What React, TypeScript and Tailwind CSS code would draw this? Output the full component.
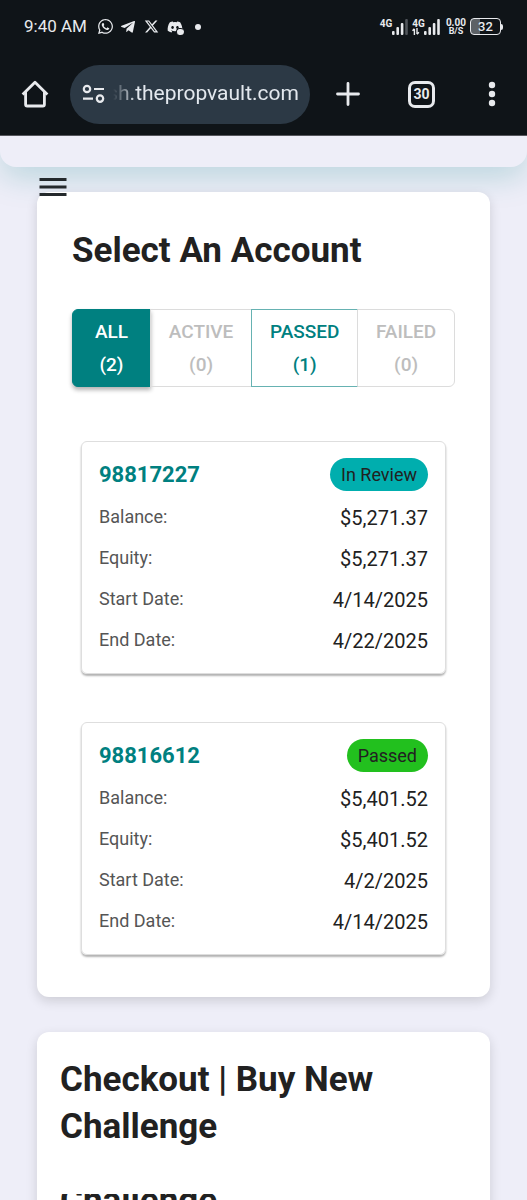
import { useState } from 'react'
import { FaDiscord, FaTelegramPlane, FaWhatsapp } from 'react-icons/fa'
import { FaXTwitter } from 'react-icons/fa6'
import { MdMenu } from 'react-icons/md'

const filters = [
  { label: 'ALL', count: 2 },
  { label: 'ACTIVE', count: 0 },
  { label: 'PASSED', count: 1 },
  { label: 'FAILED', count: 0 }
]

const accounts = [
  {
    id: '98817227',
    status: 'In Review',
    badge: 'bg-[#00aeae]',
    details: [
      { label: 'Balance:', value: '$5,271.37' },
      { label: 'Equity:', value: '$5,271.37' },
      { label: 'Start Date:', value: '4/14/2025' },
      { label: 'End Date:', value: '4/22/2025' }
    ]
  },
  {
    id: '98816612',
    status: 'Passed',
    badge: 'bg-[#22c01e]',
    details: [
      { label: 'Balance:', value: '$5,401.52' },
      { label: 'Equity:', value: '$5,401.52' },
      { label: 'Start Date:', value: '4/2/2025' },
      { label: 'End Date:', value: '4/14/2025' }
    ]
  }
]

function SignalBars({ weak }: { weak?: boolean }) {
  return (
    <svg width="16" height="16" viewBox="0 0 16 16" fill="#e8eaed">
      <rect x="0" y="12" width="2.6" height="4" rx="1" />
      <rect x="4.4" y="8" width="2.6" height="8" rx="1" />
      <rect x="8.8" y="4" width="2.6" height="12" rx="1" />
      <rect x="13.2" y="0" width="2.6" height="16" rx="1" fill={weak ? '#50555b' : '#e8eaed'} />
    </svg>
  )
}

function StatusBar() {
  return (
    <div className="flex h-[53px] items-center justify-between pl-6 pr-6 text-[#e8eaed]">
      <div className="flex items-center">
        <span className="text-[17px]">9:40 AM</span>
        <FaWhatsapp className="ml-[10px] size-[17px]" />
        <FaTelegramPlane className="ml-[6px] size-4" />
        <FaXTwitter className="ml-2 size-[15px]" />
        <span className="relative ml-2 flex">
          <FaDiscord className="size-4" />
          <span className="absolute -right-px bottom-0 h-[7px] w-2 rounded-sm border-l border-t border-[#0f1418] bg-[#e8eaed]" />
        </span>
        <span className="ml-3 size-[6px] rounded-full bg-[#e8eaed]" />
      </div>
      <div className="flex items-center">
        <div className="flex h-4 items-end">
          <span className="self-start text-[10px] font-bold leading-[9px]">4G</span>
          <SignalBars weak />
        </div>
        <div className="ml-1 flex h-4 items-end">
          <div className="-mr-px flex flex-col">
            <span className="text-[10px] font-bold leading-[9px]">4G</span>
            <svg width="8" height="7" viewBox="0 0 8 7" fill="none" stroke="#e8eaed" strokeWidth="1.4">
              <path d="M2.4 7V1M0.5 2.8L2.4 0.8" />
              <path d="M5 0v6M6.9 4.2L5 6.2" />
            </svg>
          </div>
          <SignalBars />
        </div>
        <div className="ml-[6px] flex flex-col items-center font-bold">
          <span className="text-[10px] leading-[9px]">0.00</span>
          <span className="text-[9px] leading-[8px]">B/S</span>
        </div>
        <div className="ml-1 flex items-center">
          <span className="flex h-[17px] w-[31px] items-center justify-center rounded-[4px] border border-[#e8eaed] bg-linear-to-r from-[#5c6166] from-32% to-transparent to-32% text-[13px] font-medium">
            32
          </span>
          <span className="h-[6px] w-[2px] rounded-r-sm bg-[#e8eaed]" />
        </div>
      </div>
    </div>
  )
}

function BrowserToolbar() {
  return (
    <div className="flex h-[82px] items-center pl-5 pr-[21px] text-[#e8eaed]">
      <button aria-label="Home" className="mr-5 shrink-0">
        <svg width="30" height="30" viewBox="0 0 30 30" fill="none" stroke="#e8eaed" strokeWidth="2.8" strokeLinejoin="round">
          <path d="M2.6 15.6L15 3.2l12.4 12.4" />
          <path d="M5.6 13V25.4Q5.6 27 7.2 27H22.8Q24.4 27 24.4 25.4V13" />
        </svg>
      </button>
      <div className="flex h-[59px] w-[240px] flex-auto items-center rounded-full bg-[#2c3945] pl-3 pr-[11px]">
        <svg width="24" height="20" viewBox="0 0 24 20" fill="none" stroke="#e8eaed" strokeWidth="2.2" className="shrink-0">
          <circle cx="5" cy="5" r="3.2" />
          <path d="M12 5h10M1 14.6h10" />
          <circle cx="18" cy="14.6" r="3.2" />
        </svg>
        <input
          aria-label="Address"
          defaultValue="sh.thepropvault.com"
          className="w-0 min-w-0 flex-1 text-right text-[21px] text-[#e3e8ee] outline-none mask-l-from-[162px] mask-l-to-[186px]"
        />
      </div>
      <button aria-label="New tab" className="ml-6 shrink-0">
        <svg width="28" height="28" viewBox="0 0 28 28" stroke="#e8eaed" strokeWidth="2.8" strokeLinecap="round">
          <path d="M14 3.5v21M3.5 14h21" />
        </svg>
      </button>
      <button aria-label="Tabs" className="ml-[46px] flex size-[27px] shrink-0 items-center justify-center rounded-[7px] border-[3px] border-[#e8eaed] text-sm font-bold">
        30
      </button>
      <button aria-label="More" className="ml-[43px] shrink-0">
        <svg width="28" height="28" viewBox="0 0 28 28" fill="#e8eaed">
          <circle cx="14" cy="5" r="3.2" />
          <circle cx="14" cy="14" r="3.2" />
          <circle cx="14" cy="23" r="3.2" />
        </svg>
      </button>
    </div>
  )
}

function filterStyle(selected: boolean, count: number) {
  if (selected) {
    return 'border-[#008080] bg-[#008080] text-white shadow-[0_3px_4px_rgba(0,0,0,0.3)]'
  }
  if (count === 0) {
    return 'border-[#dcdcdc] text-[#bdbdbd]'
  }
  return 'border-[#66b2b2] text-[#008080]'
}

export default function App() {
  const [filter, setFilter] = useState('ALL')
  const shown = accounts.filter((a) => filter === 'ALL' || a.status.toUpperCase() === filter)

  return (
    <div className="flex h-screen flex-col overflow-hidden bg-[#eeeef8] font-[Roboto,sans-serif] text-[#212121]">
      <header className="shrink-0 border-b border-[#55565c] bg-[#0f1418]">
        <StatusBar />
        <BrowserToolbar />
      </header>

      <main className="relative min-h-0 flex-1 overflow-hidden">
        <div className="h-[31px] rounded-b-2xl bg-[#eeeef8] shadow-[0_8px_32px_rgba(0,128,128,0.25)]" />
        <button aria-label="Open menu" className="absolute left-[35px] top-[33px]">
          <MdMenu className="size-9 text-[#24292c]" />
        </button>

        <section className="mx-[37px] mt-[25px] rounded-xl bg-white px-[35px] pb-[42px] pt-[35px] shadow-[0_4px_12px_rgba(0,0,0,0.14)]">
          <h1 className="text-[35px] font-bold leading-[47px]">Select An Account</h1>

          <div className="mt-[35px] flex rounded-md">
            {filters.map((item) => (
              <button
                key={item.label}
                disabled={item.count === 0}
                onClick={() => setFilter(item.label)}
                className={`-ml-px flex min-w-[79px] flex-auto flex-col items-center border py-[5px] text-[19px] font-medium leading-[33px] first:ml-0 first:rounded-l-md last:rounded-r-md ${filterStyle(filter === item.label, item.count)}`}
              >
                <span className="px-[17px]">{item.label}</span>
                <span>({item.count})</span>
              </button>
            ))}
          </div>

          <div className="mx-[9px] mt-[54px] flex flex-col gap-12">
            {shown.map((account) => (
              <article
                key={account.id}
                className="rounded-md border border-[#dedede] px-[17px] pb-[15px] pt-4 shadow-[0_2px_2px_rgba(0,0,0,0.3)]"
              >
                <div className="mb-[11px] flex items-center justify-between">
                  <h2 className="text-[22px] font-bold leading-[33px] text-[#008080]">{account.id}</h2>
                  <span className={`rounded-full px-[11px] text-lg leading-[33px] ${account.badge}`}>
                    {account.status}
                  </span>
                </div>
                <dl className="flex flex-col gap-2">
                  {account.details.map((row) => (
                    <div key={row.label} className="flex items-start justify-between">
                      <dt className="text-lg leading-[29px] text-[#555555]">{row.label}</dt>
                      <dd className="text-xl leading-[33px]">{row.value}</dd>
                    </div>
                  ))}
                </dl>
              </article>
            ))}
          </div>
        </section>

        <section className="mx-[37px] mt-[35px] h-full rounded-xl bg-white px-[23px] pt-6 shadow-[0_4px_12px_rgba(0,0,0,0.14)]">
          <h2 className="text-[35px] font-bold leading-[47px]">Checkout | Buy New Challenge</h2>
          {/* next heading is only partly scrolled into view */}
          <div className="mt-11 flex h-[30px] items-end overflow-hidden text-[35px] font-bold leading-[47px]">
            Challenge
          </div>
        </section>
      </main>
    </div>
  )
}
